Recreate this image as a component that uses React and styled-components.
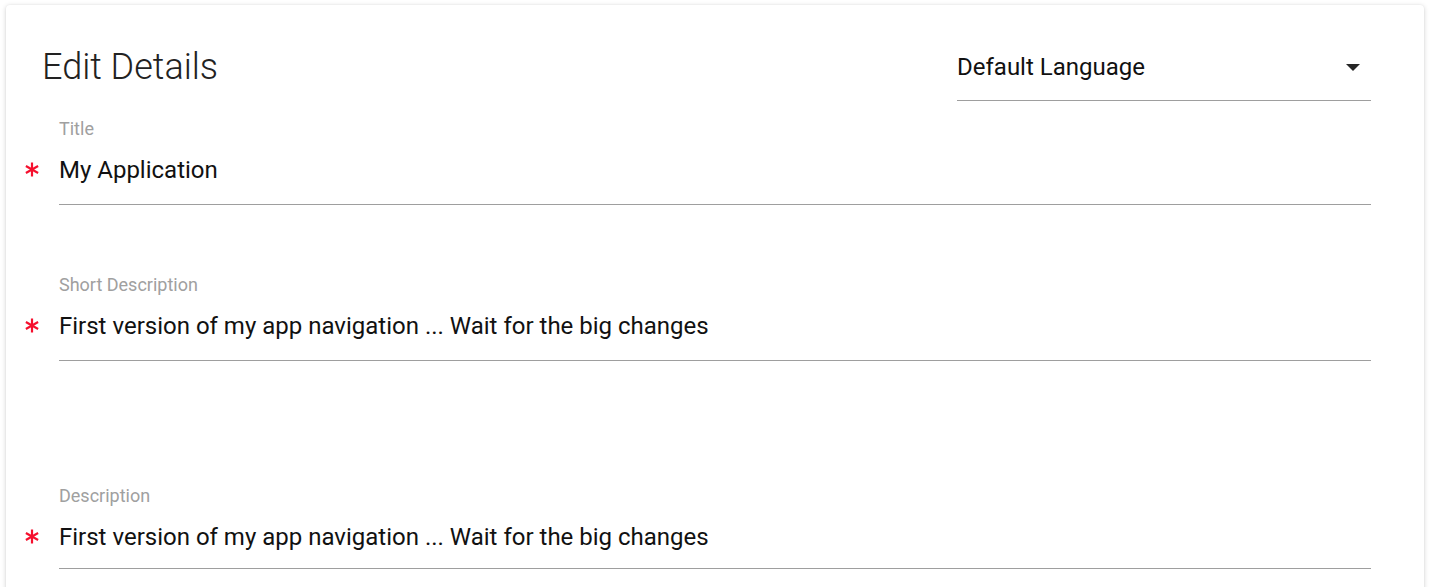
import React from 'react'
import styled, { createGlobalStyle } from "styled-components";

const GlobalStyle = createGlobalStyle`
    body {
        margin: 0;
        background: #ffffff;
        font-family: Roboto, "Noto Sans", sans-serif;
    }
`;

const fields = [
    { label: 'Title', value: 'My Application', gap: 0, bottom: 18 },
    { label: 'Short Description', value: 'First version of my app navigation ... Wait for the big changes', gap: 70, bottom: 18 },
    { label: 'Description', value: 'First version of my app navigation ... Wait for the big changes', gap: 125, bottom: 15 },
];

function Asterisk() {
    return (
        <svg width="14" height="15" viewBox="0 0 14 15">
            <g stroke="#f5102e" strokeWidth="2.2">
                <line x1="7" y1="0.5" x2="7" y2="14.5" />
                <line x1="0.9" y1="4" x2="13.1" y2="11" />
                <line x1="0.9" y1="11" x2="13.1" y2="4" />
            </g>
        </svg>
    )
}

function App() {
    return (
        <Page>
            <GlobalStyle />
            <Card>
                <Header>
                    <Heading>Edit Details</Heading>
                    <Select>
                        <SelectText>Default Language</SelectText>
                        <svg width="14" height="7" viewBox="0 0 14 7">
                            <polygon points="0,0 14,0 7,7" fill="#262626" />
                        </svg>
                    </Select>
                </Header>

                <Form>
                    {fields.map((f) => (
                        <Field key={f.label} $gap={f.gap}>
                            <Label>{f.label}</Label>
                            <Required><Asterisk /></Required>
                            <Value $bottom={f.bottom}>{f.value}</Value>
                        </Field>
                    ))}
                </Form>
            </Card>
        </Page>
    )
}

export default App;


const Page = styled.div`
    padding: 5px 7px 0 6px;
    height: 587px;
    box-sizing: border-box;
    overflow: hidden;
`;

const Card = styled.div`
    background: #fff;
    border-radius: 4px;
    box-shadow: 0 1px 5px rgba(0, 0, 0, 0.18), 0 0 2px rgba(0, 0, 0, 0.06);
    padding: 40px 53px 40px 0;
    min-height: 700px;
`;

const Header = styled.div`
    display: flex;
    justify-content: space-between;
    align-items: flex-start;
    padding-left: 36px;
`;

const Heading = styled.h1`
    margin: 0;
    font-size: 36px;
    font-weight: 300;
    line-height: 44px;
    color: #222;
`;

const Select = styled.div`
    width: 414px;
    box-sizing: border-box;
    display: flex;
    align-items: center;
    justify-content: space-between;
    padding: 0 11px 11px 0;
    border-bottom: 1px solid #9e9e9e;
`;

const SelectText = styled.span`
    font-size: 24px;
    line-height: 44px;
    color: #111;
`;

const Form = styled.div`
    margin-top: 18px;
`;

const Field = styled.div`
    display: grid;
    grid-template-columns: 53px 1fr;
    align-items: center;
    margin-top: ${(p) => p.$gap}px;
`;

const Label = styled.div`
    grid-column: 2;
    font-size: 18px;
    line-height: 20px;
    color: #a0a0a0;
    margin-bottom: 15px;
`;

const Required = styled.span`
    grid-column: 1;
    display: flex;
    align-self: start;
    padding: 8px 0 0 19px;
`;

const Value = styled.div`
    grid-column: 2;
    font-size: 24px;
    line-height: 32px;
    color: #111;
    padding-bottom: ${(p) => p.$bottom}px;
    border-bottom: 1px solid #9e9e9e;
`;
